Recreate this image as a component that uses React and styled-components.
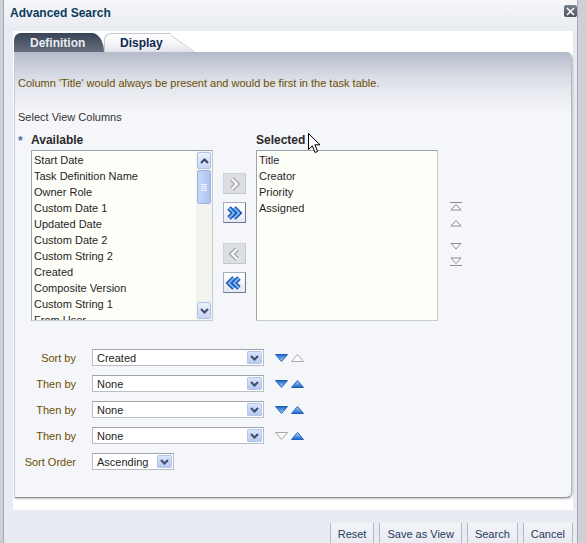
import styled, { createGlobalStyle } from "styled-components";

const GlobalStyle = createGlobalStyle`
  html, body {
    margin: 0;
    padding: 0;
  }
  body {
    background: #cdd0d6;
    font-family: "Liberation Sans", Arial, sans-serif;
    font-size: 11px;
    color: #222;
  }
`;

const available = [
  "Start Date",
  "Task Definition Name",
  "Owner Role",
  "Custom Date 1",
  "Updated Date",
  "Custom Date 2",
  "Custom String 2",
  "Created",
  "Composite Version",
  "Custom String 1",
  "From User",
];

const selected = ["Title", "Creator", "Priority", "Assigned"];

const sorts = [
  { label: "Sort by", value: "Created", down: true, up: false },
  { label: "Then by", value: "None", down: true, up: true },
  { label: "Then by", value: "None", down: true, up: true },
  { label: "Then by", value: "None", down: false, up: true },
];

function Chevrons({ dir, double, enabled }) {
  const outer = enabled ? "#1d4fae" : "#a3a7ad";
  const inner = enabled ? "#74b6f4" : "#ffffff";
  const shapes = double
    ? [
        [5, 10],
        [10, 15],
      ]
    : [[8, 13]];
  const pts = ([a, b]) =>
    dir === "right" ? `${a},5 ${b},10 ${a},15` : `${b},5 ${a},10 ${b},15`;
  return (
    <svg width="21" height="19" viewBox="0 0 21 19">
      {shapes.map((s, i) => (
        <g key={i}>
          <polyline points={pts(s)} fill="none" stroke={outer} strokeWidth="4.8" />
          <polyline points={pts(s)} fill="none" stroke={inner} strokeWidth="2.1" />
        </g>
      ))}
    </svg>
  );
}

function ReorderGlyph({ kind }) {
  const up = kind === "top" || kind === "up";
  return (
    <svg width="12" height="9" viewBox="0 0 12 9">
      {kind === "top" && <line x1="0" y1="0.5" x2="12" y2="0.5" stroke="#8c8c8c" />}
      {kind === "bottom" && <line x1="0" y1="8.5" x2="12" y2="8.5" stroke="#8c8c8c" />}
      <polygon
        points={
          up
            ? kind === "top"
              ? "1,8 6,2.5 11,8"
              : "1,7 6,1.5 11,7"
            : kind === "bottom"
            ? "1,1 6,6.5 11,1"
            : "1,1.5 6,7 11,1.5"
        }
        fill="#fbfbfb"
        stroke="#8c8c8c"
      />
    </svg>
  );
}

function SortGlyph({ dir, active, id }) {
  const pts = dir === "down" ? "0.5,0.5 12.5,0.5 6.5,7.5" : "0.5,7.5 12.5,7.5 6.5,0.5";
  return (
    <svg width="13" height="8" viewBox="0 0 13 8">
      <defs>
        <linearGradient id={id} x1="0" y1="0" x2="0" y2="1">
          <stop offset="0" stopColor={dir === "down" ? "#1f5fc0" : "#bfe0fb"} />
          <stop offset="0.5" stopColor="#5aa2ea" />
          <stop offset="1" stopColor={dir === "down" ? "#b8dcfa" : "#1f5fc0"} />
        </linearGradient>
      </defs>
      <polygon
        points={pts}
        fill={active ? `url(#${id})` : "#fafafa"}
        stroke={active ? "#235fb7" : "#a9a9a9"}
        strokeLinejoin="round"
      />
    </svg>
  );
}

function DropChevron() {
  return (
    <svg width="9" height="6" viewBox="0 0 9 6">
      <polyline points="1,1 4.5,4.5 8,1" fill="none" stroke="#3e4d6c" strokeWidth="2" />
    </svg>
  );
}

function ListBoxView({ items, scroll }) {
  return (
    <ListBox>
      <ListItems>
        {items.map((t) => (
          <ListItem key={t}>{t}</ListItem>
        ))}
      </ListItems>
      {scroll && (
        <Scrollbar>
          <ScrollButton>
            <svg width="9" height="6" viewBox="0 0 9 6">
              <polyline points="1,5 4.5,1.5 8,5" fill="none" stroke="#36466a" strokeWidth="2" />
            </svg>
          </ScrollButton>
          <Thumb>
            <Grip />
            <Grip />
            <Grip />
            <Grip />
          </Thumb>
          <Track />
          <ScrollButton>
            <DropChevron />
          </ScrollButton>
        </Scrollbar>
      )}
    </ListBox>
  );
}

export default function App() {
  return (
    <Page>
      <GlobalStyle />
      <Dialog>
        <TitleBar>
          <Title>Advanced Search</Title>
          <CloseButton>
            <svg width="9" height="9" viewBox="0 0 9 9">
              <path d="M1 1 L8 8 M8 1 L1 8" stroke="#fff" strokeWidth="1.6" />
            </svg>
          </CloseButton>
        </TitleBar>
        <Body>
          <TabRow>
            <Tab>
              <span>Definition</span>
            </Tab>
            <Tab $active>
              <span>Display</span>
            </Tab>
          </TabRow>
          <Panel>
            <Message>
              Column 'Title' would always be present and would be first in the task table.
            </Message>
            <SectionLabel>Select View Columns</SectionLabel>
            <ColumnsGrid>
              <Required>*</Required>
              <ColumnLabel $col={2}>Available</ColumnLabel>
              <ColumnLabel $col={6}>Selected</ColumnLabel>
              <ListCell $col={2}>
                <ListBoxView items={available} scroll />
              </ListCell>
              <ShuttleColumn>
                <ShuttleButton $top={0}>
                  <Chevrons dir="right" />
                </ShuttleButton>
                <ShuttleButton $top={8} $enabled>
                  <Chevrons dir="right" double enabled />
                </ShuttleButton>
                <ShuttleButton $top={20}>
                  <Chevrons dir="left" />
                </ShuttleButton>
                <ShuttleButton $top={8} $enabled>
                  <Chevrons dir="left" double enabled />
                </ShuttleButton>
              </ShuttleColumn>
              <ListCell $col={6}>
                <ListBoxView items={selected} />
              </ListCell>
              <ReorderColumn>
                <ReorderIcon $top={0}>
                  <ReorderGlyph kind="top" />
                </ReorderIcon>
                <ReorderIcon $top={8}>
                  <ReorderGlyph kind="up" />
                </ReorderIcon>
                <ReorderIcon $top={14}>
                  <ReorderGlyph kind="down" />
                </ReorderIcon>
                <ReorderIcon $top={6}>
                  <ReorderGlyph kind="bottom" />
                </ReorderIcon>
              </ReorderColumn>
            </ColumnsGrid>
            <SortForm>
              {sorts.map((s, i) => (
                <SortRow key={i}>
                  <SortLabel>{s.label}</SortLabel>
                  <Select $width={172}>
                    <span>{s.value}</span>
                    <SelectButton>
                      <DropChevron />
                    </SelectButton>
                  </Select>
                  <SortArrows>
                    <SortGlyph dir="down" active={s.down} id={`d${i}`} />
                    <SortGlyph dir="up" active={s.up} id={`u${i}`} />
                  </SortArrows>
                </SortRow>
              ))}
              <SortRow>
                <SortLabel>Sort Order</SortLabel>
                <Select $width={82}>
                  <span>Ascending</span>
                  <SelectButton>
                    <DropChevron />
                  </SelectButton>
                </Select>
              </SortRow>
            </SortForm>
          </Panel>
        </Body>
        <Footer>
          <FooterButton>Reset</FooterButton>
          <FooterButton>Save as View</FooterButton>
          <FooterButton>Search</FooterButton>
          <FooterButton>Cancel</FooterButton>
        </Footer>
      </Dialog>
      <Cursor>
        <svg width="13" height="21" viewBox="0 0 13 21">
          <path
            d="M0.5 0.5 L0.5 16.5 L4.3 12.8 L7 19.5 L9.6 18.4 L6.9 11.8 L12 11.8 Z"
            fill="#fff"
            stroke="#000"
            strokeLinejoin="round"
          />
        </svg>
      </Cursor>
    </Page>
  );
}

const Page = styled.div`
  position: relative;
  width: 586px;
  height: 543px;
  overflow: hidden;
  box-sizing: border-box;
  padding-left: 3px;
  background: #cdd0d6;
`;

const Dialog = styled.div`
  width: 575px;
  height: 560px;
  box-sizing: border-box;
  display: flex;
  flex-direction: column;
  border-left: 1px solid #a5aab4;
  border-right: 1px solid #a5aab4;
  background: linear-gradient(to bottom, #f6f7fa 0, #e8ebf1 31px, #e8ebf1 100%);
`;

const TitleBar = styled.div`
  height: 31px;
  box-sizing: border-box;
  display: flex;
  justify-content: space-between;
  align-items: flex-start;
  padding: 5px 0 0 6px;
`;

const Title = styled.div`
  font-size: 12px;
  font-weight: bold;
  line-height: 16px;
  color: #0d3a5b;
`;

const CloseButton = styled.div`
  width: 13px;
  height: 12px;
  display: flex;
  align-items: center;
  justify-content: center;
  border-radius: 2px;
  background: linear-gradient(to bottom, #7a828d, #4b535e);
`;

const Body = styled.div`
  margin: 0 4px 0 9px;
  padding: 2px 1px 12px 1px;
  background: #fff;
`;

const TabRow = styled.div`
  display: flex;
  height: 19px;
`;

const Tab = styled.div`
  position: relative;
  height: 19px;
  box-sizing: border-box;
  display: flex;
  align-items: center;
  font-size: 12px;
  font-weight: bold;
  width: ${({ $active }) => ($active ? "89px" : "90px")};
  padding-left: 16px;
  color: ${({ $active }) => ($active ? "#0f2a52" : "#e9edf3")};
  background: ${({ $active }) =>
    $active ? "none" : "linear-gradient(to bottom, #394454, #646e7d)"};
  border-radius: 7px 12px 0 0 / 7px 19px 0 0;

  span {
    position: relative;
    z-index: 2;
  }

  &::before,
  &::after {
    display: ${({ $active }) => ($active ? "block" : "none")};
    content: "";
    position: absolute;
    top: 0;
    bottom: 0;
    background: linear-gradient(to bottom, #ffffff, #f3f4f7 60%, #e1e3e9);
    border-top: 1px solid #c2c6ce;
    box-sizing: border-box;
  }

  &::before {
    left: 0;
    right: 22px;
    border-left: 1px solid #c2c6ce;
    border-radius: 7px 0 0 0;
    z-index: 1;
  }

  &::after {
    right: -2px;
    width: 36px;
    border-right: 1px solid #b8bcc5;
    transform-origin: bottom right;
    transform: skewX(55deg);
    z-index: 0;
  }
`;

const Panel = styled.div`
  height: 446px;
  box-sizing: border-box;
  display: flex;
  flex-direction: column;
  padding: 24px 0 0 3px;
  border-left: 1px solid #c6cad2;
  border-right: 1px solid #b4b9c2;
  border-bottom: 1px solid #8e939c;
  border-radius: 0 6px 6px 0;
  box-shadow: 1px 1px 2px rgba(0, 0, 0, 0.25);
  background: linear-gradient(
    to bottom,
    #b3bac9 0,
    #c4c9d5 10px,
    #d8dbe4 24px,
    #e5e8ee 38px,
    #f0f1f5 50px,
    #f5f6f9 62px,
    #f5f6f9 100%
  );
`;

const Message = styled.div`
  line-height: 14px;
  color: #6b4f00;
`;

const SectionLabel = styled.div`
  margin-top: 20px;
  line-height: 14px;
  color: #333;
`;

const ColumnsGrid = styled.div`
  margin-top: 9px;
  display: grid;
  grid-template-columns: 13px 182px 9px 23px 11px 182px 12px 12px;
  grid-template-rows: 14px 171px;
  row-gap: 3px;
`;

const Required = styled.div`
  grid-column: 1;
  grid-row: 1;
  padding-top: 3px;
  color: #3d6fae;
  font-weight: bold;
  font-size: 12px;
  line-height: 11px;
`;

const ColumnLabel = styled.div`
  grid-column: ${({ $col }) => $col};
  grid-row: 1;
  font-size: 12px;
  font-weight: bold;
  line-height: 14px;
  color: #2a2a2a;
`;

const ListCell = styled.div`
  grid-column: ${({ $col }) => $col};
  grid-row: 2;
`;

const ListBox = styled.div`
  height: 171px;
  box-sizing: border-box;
  display: flex;
  overflow: hidden;
  border: 1px solid #c7cbd2;
  border-top-color: #9aa1ad;
  border-left-color: #9ea5b1;
  background: #fefef9;
`;

const ListItems = styled.div`
  flex: 1;
  padding: 1px 0 0 2px;
  overflow: hidden;
`;

const ListItem = styled.div`
  line-height: 16px;
  white-space: nowrap;
  color: #1e1e1e;
`;

const Scrollbar = styled.div`
  width: 16px;
  display: flex;
  flex-direction: column;
  background: #f4f4ee;
`;

const ScrollButton = styled.div`
  height: 15px;
  margin: 1px;
  display: flex;
  align-items: center;
  justify-content: center;
  border: 1px solid #b2c3e6;
  border-radius: 2px;
  background: linear-gradient(to bottom, #eaf0fc, #c8d7f5);
`;

const Thumb = styled.div`
  height: 32px;
  margin: 0 1px;
  display: flex;
  flex-direction: column;
  align-items: center;
  justify-content: center;
  gap: 1px;
  border: 1px solid #9fb4e3;
  border-radius: 2px;
  background: linear-gradient(to right, #c7d7f8, #b7cbf3 60%, #a9bfee);
`;

const Grip = styled.div`
  width: 6px;
  height: 1px;
  background: #f1f5fe;
`;

const Track = styled.div`
  flex: 1;
`;

const ShuttleColumn = styled.div`
  grid-column: 4;
  grid-row: 2;
  display: flex;
  flex-direction: column;
  padding-top: 23px;
  margin-left: 1px;
`;

const ShuttleButton = styled.div`
  width: 23px;
  height: 21px;
  box-sizing: border-box;
  margin-top: ${({ $top }) => $top}px;
  display: flex;
  align-items: center;
  justify-content: center;
  border: 1px solid ${({ $enabled }) => ($enabled ? "#a5afbf" : "#cfd2d7")};
  border-right-color: ${({ $enabled }) => ($enabled ? "#6e7a8d" : "#c4c7cd")};
  border-bottom-color: ${({ $enabled }) => ($enabled ? "#6e7a8d" : "#c4c7cd")};
  background: ${({ $enabled }) =>
    $enabled ? "linear-gradient(to bottom, #ffffff, #e4e9f2)" : "#dcdee3"};
`;

const ReorderColumn = styled.div`
  grid-column: 8;
  grid-row: 2;
  display: flex;
  flex-direction: column;
  padding-top: 52px;
`;

const ReorderIcon = styled.div`
  height: 9px;
  margin-top: ${({ $top }) => $top}px;
  display: flex;
`;

const SortForm = styled.div`
  margin-top: 28px;
  display: flex;
  flex-direction: column;
  gap: 9px;
`;

const SortRow = styled.div`
  height: 17px;
  display: flex;
  align-items: center;
`;

const SortLabel = styled.div`
  width: 58px;
  margin-right: 16px;
  text-align: right;
  color: #6b4f00;
  white-space: nowrap;
`;

const Select = styled.div`
  width: ${({ $width }) => $width}px;
  height: 17px;
  box-sizing: border-box;
  display: flex;
  align-items: center;
  justify-content: space-between;
  padding: 0 1px 0 4px;
  border: 1px solid #b9bdc6;
  border-top-color: #9da2ab;
  background: #fff;
  color: #1e1e1e;
`;

const SelectButton = styled.div`
  width: 15px;
  height: 13px;
  box-sizing: border-box;
  display: flex;
  align-items: center;
  justify-content: center;
  border: 1px solid #b5c6ea;
  border-radius: 1px;
  background: linear-gradient(to bottom, #dbe5f8, #b7c9ef);
`;

const SortArrows = styled.div`
  display: flex;
  gap: 3px;
  margin-left: 11px;
`;

const Footer = styled.div`
  display: flex;
  justify-content: flex-end;
  gap: 5px;
  padding: 13px 4px 0 0;
`;

const FooterButton = styled.div`
  height: 22px;
  display: flex;
  align-items: center;
  padding: 0 7px;
  border-left: 1px solid #b3b8c2;
  border-right: 1px solid #b3b8c2;
  background: linear-gradient(to bottom, #f3f4f8, #e7eaf0);
  color: #1f3a60;
  white-space: nowrap;
`;

const Cursor = styled.div`
  position: absolute;
  left: 308px;
  top: 133px;
  display: flex;
`;
